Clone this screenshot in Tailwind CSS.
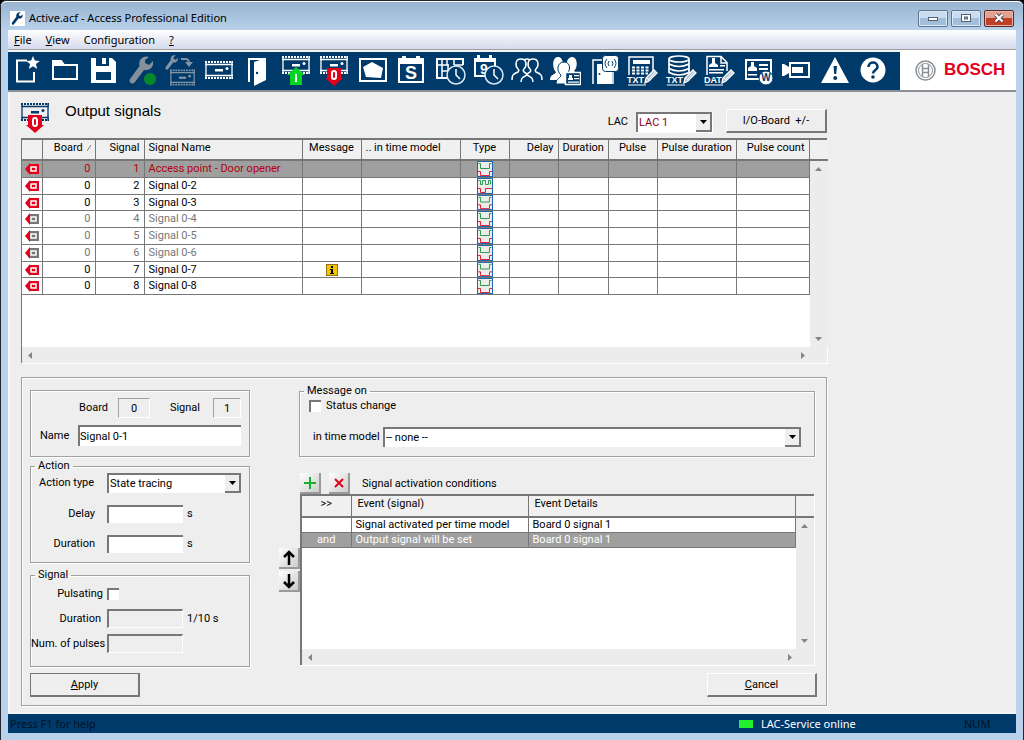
<!DOCTYPE html>
<html lang="en">
<head>
  <meta charset="UTF-8">
  <meta name="viewport" content="width=device-width, initial-scale=1.0">
  <title>Active.acf - Access Professional Edition</title>
  <script src="https://cdn.jsdelivr.net/npm/@tailwindcss/browser@4"></script>
</head>
<body class="bg-black font-[Roboto,'Noto_Sans',sans-serif] text-[11px] leading-[14px] text-black">

<!-- Shared icons -->
<svg class="hidden">
  <symbol id="board" viewBox="0 0 28 18">
    <path d="M1 0v18M27 0v18M0 3.500h28M0 14.500h28" fill="none" stroke="currentColor" stroke-width="1.300"/>
    <path d="M0 1h28M0 17h28" fill="none" stroke="currentColor" stroke-width="2" stroke-dasharray="2 1"/>
    <path d="M10 8h8v2.500h-8z" fill="currentColor"/>
    <circle cx="22" cy="7.500" r="1.500" fill="currentColor"/>
  </symbol>
  <symbol id="wrench" viewBox="0 0 26 28">
    <path d="M20 1c-5-2-11 2-9.500 9L1 23c-2 4 3 6 5 3l9-12c6 1 10-3 9-9l-4 4-4-2 0-3z" fill="currentColor"/>
  </symbol>
  <symbol id="pencil" viewBox="0 0 14 15">
    <path d="M1 14l1-5 8-8 3 3-8 8z" fill="#a9bccd" stroke="#fff" stroke-width="1.300"/>
    <path d="M3 9l3 3M5 10l6-7" stroke="#fff" fill="none"/>
  </symbol>
  <symbol id="clock" viewBox="0 0 20 20">
    <circle cx="10" cy="10" r="9" fill="#003a6b" stroke="#d8e9f7" stroke-width="1.500"/>
    <path d="M10 4v6l4 4" fill="none" stroke="#fff" stroke-width="1.500"/>
  </symbol>
  <symbol id="out-on" viewBox="0 0 14 12">
    <path d="M0 6l5-6v1h9v10H5v1z" fill="#e2001a"/>
    <rect x="6" y="4" width="5" height="4" fill="none" stroke="#fff" stroke-width="1.500"/>
  </symbol>
  <symbol id="out-off" viewBox="0 0 14 12">
    <path d="M5 1h9v10H5z" fill="#777"/>
    <path d="M0 6l5-6v12z" fill="#e2001a"/>
    <rect x="6" y="4" width="5" height="4" fill="#777" stroke="#fff" stroke-width="1.500"/>
  </symbol>
  <symbol id="trace" viewBox="0 0 16 16">
    <rect x="0.500" y="0.500" width="15" height="15" fill="#ececea" stroke="#1f66ad"/>
    <path d="M1.500 2.500h2v5h9v-5h2" fill="none" stroke="#2f9a50"/>
    <path d="M1 10.500h2.500v4h9v-4H15" fill="none" stroke="#e2203a"/>
  </symbol>
  <symbol id="trace-pulse" viewBox="0 0 16 16">
    <rect x="0.500" y="0.500" width="15" height="15" fill="#ececea" stroke="#1f66ad"/>
    <path d="M1.500 2.500h2v4h2v-4h3v4h3v-4h2v4" fill="none" stroke="#2f9a50"/>
    <path d="M1 10.500h2.500v4h5v-4H15" fill="none" stroke="#e2203a"/>
  </symbol>
</svg>

<div class="flex min-h-screen flex-col rounded-t-md border border-[#23282e] bg-[#b9d1ea] px-[7px] pb-[7px]">

  <!-- Title bar -->
  <header class="-mx-[7px] flex h-[29px] items-center rounded-t-md border-t border-white bg-linear-to-b from-[#98b4d1] to-[#b9d1ea] pt-1 pr-[9px] pl-[9px]">
    <svg class="h-[15px] w-[15px] bg-white p-px text-[#003a6b]"><use href="#wrench"/></svg>
    <h1 class="ml-1 flex-1 font-['Noto_Sans',sans-serif] text-[11px]">Active.acf - Access Professional Edition</h1>
    <div class="flex gap-[3px]">
      <button type="button" aria-label="Minimize" class="flex h-[17px] w-[30px] items-center justify-center rounded-xs border border-[#5d7390] bg-linear-to-b from-[#c9dcf0] from-50% to-[#a2bdd9] to-50% shadow-[inset_0_0_0_1px_#dceaf7]">
        <svg width="12" height="10"><rect x="1.500" y="4.500" width="9" height="3" fill="#fff" stroke="#53606f"/></svg>
      </button>
      <button type="button" aria-label="Maximize" class="flex h-[17px] w-[30px] items-center justify-center rounded-xs border border-[#5d7390] bg-linear-to-b from-[#c9dcf0] from-50% to-[#a2bdd9] to-50% shadow-[inset_0_0_0_1px_#dceaf7]">
        <svg width="12" height="10"><rect x="1.500" y="1.500" width="9" height="7" fill="#fff" stroke="#53606f"/><rect x="4.500" y="4" width="3" height="2" fill="#a2bdd9" stroke="#53606f"/></svg>
      </button>
      <button type="button" aria-label="Close" class="flex h-[17px] w-[30px] items-center justify-center rounded-xs border border-[#5b2a26] bg-linear-to-b from-[#e0a193] from-50% to-[#c33f24] to-50% shadow-[inset_0_0_0_1px_#e9b5a8]">
        <svg width="12" height="10"><path d="M2.500 1.500l7 7M9.500 1.500l-7 7" stroke="#53424a" stroke-width="4"/><path d="M2.500 1.500l7 7M9.500 1.500l-7 7" stroke="#fff" stroke-width="2.300"/></svg>
      </button>
    </div>
  </header>

  <!-- Menu -->
  <nav class="flex h-[19px] items-center gap-[14px] bg-linear-to-b from-white to-[#d5daec] pl-[6px] font-['Noto_Sans',sans-serif] text-[11px]">
    <a href="#"><u>F</u>ile</a>
    <a href="#"><u>V</u>iew</a>
    <a href="#">Configuration</a>
    <a href="#"><u>?</u></a>
  </nav>

  <!-- Toolbar -->
  <div class="flex h-[43px] border-t border-b-2 border-t-[#a0a0a0] border-b-[#8b8f96] bg-[#003a6b]">
    <div class="flex flex-1 items-center justify-between border-t-2 border-[#f4f4f4] pr-[11px] pl-[2px] text-white">
      <button type="button" title="New"><svg width="32" height="32" fill="none" stroke="currentColor" stroke-width="2"><path d="M17 5.500H7v21h17V17"/><path d="M23 1l1.800 4.500 5 .4-3.900 3.200 1.300 4.900-4.200-2.700-4.200 2.700 1.300-4.900-3.900-3.200 5-.4z" fill="currentColor" stroke="none"/></svg></button>
      <button type="button" title="Open"><svg width="32" height="32"><path d="M4 24V6h8l3 4h13v14z" fill="none" stroke="currentColor" stroke-width="2"/><path d="M3 5h9l5 6H3z" fill="currentColor"/></svg></button>
      <button type="button" title="Save"><svg width="32" height="32"><path fill-rule="evenodd" d="M4 3h21l4 4v21H4zM9 3v8h13V3h-3v6h-4V3zM9 17v8h15v-8z" fill="currentColor"/></svg></button>
      <button type="button" title="Maintenance"><svg width="32" height="32"><svg x="3" y="1" width="26" height="28" color="#84909c"><use href="#wrench"/></svg><circle cx="24" cy="24" r="6" fill="#07892b"/></svg></button>
      <button type="button" title="Configure controller" class="text-[#8394a5]"><svg width="32" height="32"><use href="#wrench" x="1" y="0" width="14" height="15"/><use href="#board" x="6" y="14" width="25" height="17"/><path d="M17 4h5q3 0 3 5" fill="none" stroke="currentColor" stroke-width="2"/><path d="M21 7h8l-4 5z" fill="currentColor"/></svg></button>
      <button type="button" title="Controller"><svg width="32" height="32"><use href="#board" x="2" y="6" width="28" height="18"/></svg></button>
      <button type="button" title="Entrances"><svg width="32" height="32"><path d="M8 27V4h17" fill="none" stroke="currentColor" stroke-width="2"/><path d="M13 7l12-4v22l-12 6z" fill="currentColor"/><circle cx="16" cy="18" r="1.200" fill="#003a6b"/></svg></button>
      <button type="button" title="Input signals"><svg width="32" height="32"><use href="#board" x="2" y="1" width="28" height="18"/><path d="M16 12l8.500 8H22v10H10V20H7.500z" fill="#00d520"/><path d="M16 19v8" stroke="#fff" stroke-width="2"/></svg></button>
      <button type="button" title="Output signals"><svg width="32" height="32"><use href="#board" x="2" y="1" width="28" height="18"/><path d="M9 13h14v10h2l-9 8-9-8h2z" fill="#e2001a"/><rect x="14" y="16" width="4" height="8" rx="2" fill="none" stroke="#fff" stroke-width="2"/></svg></button>
      <button type="button" title="Areas"><svg width="32" height="32"><path d="M3 4h26v22H3z" fill="none" stroke="currentColor" stroke-width="2"/><path d="M6 12l9-5 11 6-2 10-15-1z" fill="currentColor"/></svg></button>
      <button type="button" title="Holidays"><svg width="32" height="32"><path d="M4 4h24v23H4z" fill="none" stroke="currentColor" stroke-width="2"/><path d="M3 3h4V1h4v2h10V1h4v2h4v6H3z" fill="currentColor"/><text x="16" y="24" text-anchor="middle" font-family="Liberation Sans" font-weight="700" font-size="18" fill="currentColor">S</text></svg></button>
      <button type="button" title="Day models"><svg width="32" height="32"><path d="M3 4v19h12M2 4h27v6" fill="none" stroke="currentColor" stroke-width="2"/><path d="M3 10h12M20 10h9M8 16h6M8 4v19M8 10v6M13 4v6M20 4v6M14 10v6" fill="none" stroke="currentColor" stroke-width="1.500"/><use href="#clock" x="12" y="10" width="20" height="20"/></svg></button>
      <button type="button" title="Time models"><svg width="32" height="32"><path d="M3 4h20v17H3z" fill="none" stroke="currentColor" stroke-width="2"/><path d="M2 3h3V0h3v3h9V0h3v3h4v4H2z" fill="currentColor"/><text x="12" y="19" text-anchor="middle" font-family="Liberation Sans" font-weight="700" font-size="14" fill="currentColor">9</text><use href="#clock" x="12" y="10" width="20" height="20"/></svg></button>
      <button type="button" title="Persons"><svg width="32" height="32" fill="none" stroke="currentColor" stroke-width="1.500"><path d="M1 25c0-5 1-6 6-8 1-1 1-2 0-3-3-3-3-10 3-10s6 7 3 10c-1 1-1 2 0 3 2 1 3 2 3 3M16 20c0-1 1-2 3-3 1-1 1-2 0-3-3-3-3-10 3-10s6 7 3 10c-1 1-1 2 0 3 5 2 6 3 6 8"/><path d="M10 27c0-4 2-5 6-7M22 27c0-4-2-5-6-7M13 5q3-2 6 0"/></svg></button>
      <button type="button" title="Person groups"><svg width="32" height="32" fill="currentColor"><path d="M1 25c0-6 5-5 6-8C3 13 3 2 9 2s6 11 3 15l4 8zM16 22l4-6c-4-4-3-14 3-14s6 11 2 14l4 3v3z"/><path d="M7 29c0-6 5-6 5-9-5-4-4-13 3-13s7 9 2 13c0 3 5 3 5 9z" stroke="#003a6b"/><path d="M16.500 17.500h15v12h-15z" fill="#003a6b" stroke="#fff" stroke-width="1.500"/><path d="M19 25h5v-2h-1v-3h-3v3h-1zM25 20h5v1.200h-5zM25 23h5v1.200h-5zM19 26.500h11v1.200H19z"/></svg></button>
      <button type="button" title="Readers"><svg width="32" height="32"><path d="M5 29V5h20v24" fill="none" stroke="currentColor" stroke-width="1.500"/><path d="M9 9h15v20H9z" fill="currentColor"/><circle cx="11.500" cy="19" r="1" fill="#003a6b"/><rect x="14.500" y="0.500" width="16" height="16" rx="3" fill="#fff" stroke="#003a6b"/><path d="M19 4q-4 4 0 9M21 6q-2 3 0 5M26 4q4 4 0 9M24 6q2 3 0 5" fill="none" stroke="#003a6b"/></svg></button>
      <button type="button" title="PIN text"><svg width="32" height="32"><path d="M3 20V2h24v14" fill="none" stroke="currentColor" stroke-width="1.500"/><path d="M7 5h17v4H7z" fill="currentColor"/><path d="M6 12.500h18M6 15.500h18M6 18.500h16" stroke="currentColor" stroke-width="2" stroke-dasharray="3 1.500"/><text x="1" y="28" font-family="Liberation Sans" font-weight="700" font-size="9" fill="currentColor">TXT</text><path d="M2 30h18" stroke="currentColor"/><use href="#pencil" x="18" y="14" width="14" height="15"/></svg></button>
      <button type="button" title="Database text"><svg width="32" height="32"><path d="M4 4.500v13q10 5 20 0v-13M4 9q10 5 20 0M4 13.500q10 5 20 0" fill="none" stroke="currentColor" stroke-width="1.700"/><ellipse cx="14" cy="4" rx="10" ry="3" fill="#003a6b" stroke="currentColor" stroke-width="1.700"/><text x="1" y="28" font-family="Liberation Sans" font-weight="700" font-size="9" fill="currentColor">TXT</text><path d="M2 30h18" stroke="currentColor"/><use href="#pencil" x="18" y="14" width="14" height="15"/></svg></button>
      <button type="button" title="Log data"><svg width="32" height="32"><path d="M4 20V1.500h14l6 6V16M18 1v7h6" fill="none" stroke="currentColor" stroke-width="1.500"/><path d="M6 12h9v-2l-3-2V3H9v5l-3 2zM6 14h15v1.500H6zM6 17h14v1.500H6zM17 10h5v1.500h-5z" fill="currentColor"/><text x="1" y="28" font-family="Liberation Sans" font-weight="700" font-size="9" fill="currentColor">DAT</text><path d="M2 30h18" stroke="currentColor"/><use href="#pencil" x="18" y="14" width="14" height="15"/></svg></button>
      <button type="button" title="Wiegand cards"><svg width="32" height="32"><path d="M4 5h25v19H4z" fill="none" stroke="currentColor" stroke-width="2"/><path d="M6 16h9v-3l-3-2V7H9v4l-3 2zM17 9h9v2h-9zM17 13h9v2h-9zM6 19h9v1.500H6z" fill="currentColor"/><circle cx="24" cy="23" r="7" fill="#fff" stroke="#003a6b"/><text x="24" y="26" text-anchor="middle" font-family="Liberation Sans" font-weight="700" font-size="10" fill="#003a6b">W</text></svg></button>
      <button type="button" title="Cameras"><svg width="32" height="32"><path d="M10 8h19v14H10z" fill="none" stroke="currentColor" stroke-width="2"/><path d="M2 9l2 0 5 3v6l-5 3H2zM12 12h11v6H12z" fill="currentColor"/></svg></button>
      <button type="button" title="Alarms"><svg width="32" height="32"><path d="M16 2l14 26H2z" fill="currentColor"/><path d="M14.500 11h3.500l-.8 8h-2z" fill="#003a6b"/><circle cx="16.200" cy="23" r="2" fill="#003a6b"/></svg></button>
      <button type="button" title="Help"><svg width="32" height="32"><circle cx="16" cy="15" r="12.500" fill="currentColor"/><path d="M11.500 12c0-6 9-6 9 0 0 3-4.500 3-4.500 6.500" fill="none" stroke="#003a6b" stroke-width="2.600"/><circle cx="16" cy="22" r="1.800" fill="#003a6b"/></svg></button>
    </div>
    <div class="flex w-[116px] items-center gap-2 bg-white pl-[15px]">
      <svg width="21" height="21" fill="none" stroke="#8a8f94"><circle cx="10.500" cy="10.500" r="9.500" stroke-width="1.500"/><circle cx="10.500" cy="10.500" r="7"/><path d="M7.500 4.500v12M13.500 4.500v12M7.500 8.500h6M7.500 12.500h6" stroke-width="1.500"/></svg>
      <span class="font-['Liberation_Sans',sans-serif] text-[17px] font-bold text-[#e2001a]">BOSCH</span>
    </div>
  </div>

  <!-- Work area -->
  <main class="flex-1 border-l-2 border-[#f8f8f8] bg-[#eee] pr-3 pb-[6px] pl-[11px]">
    <div class="max-w-[806px]">

      <div class="flex h-[46px] pt-[9px]">
        <svg width="28" height="33" class="text-[#003a6b]"><use href="#board" x="0" y="2" width="28" height="18"/><path d="M7 14h14v10h2l-9 8-9-8h2z" fill="#e2001a"/><rect x="12" y="17" width="4" height="8" rx="2" fill="none" stroke="#fff" stroke-width="2"/></svg>
        <h2 class="ml-4 font-['Liberation_Sans',sans-serif] text-[15px] leading-5">Output signals</h2>
        <div class="ml-auto flex items-start gap-2 pt-2">
          <label for="lac" class="pt-[6px]">LAC</label>
          <div class="relative pt-[3px]">
            <select id="lac" class="h-5 w-[76px] appearance-none border-t-2 border-l-2 border-[#777] bg-white pl-px text-[#8b0010] shadow-[1px_1px_0_#fff]"><option>LAC 1</option></select>
            <span class="pointer-events-none absolute top-[5px] right-0 flex h-[18px] w-4 items-center justify-center border-r-2 border-b-2 border-[#777] bg-[#eee]"><svg width="7" height="4"><path d="M0 0h7L3.500 4z"/></svg></span>
          </div>
          <button type="button" class="ml-[6px] h-6 w-[101px] border border-r-2 border-b-2 border-white border-r-[#777] border-b-[#777] whitespace-pre">I/O-Board  +/-</button>
        </div>
      </div>

      <!-- Output signal list -->
      <div class="border-t-2 border-l border-t-[#777] border-l-[#777] bg-[#ececec] shadow-[1px_1px_0_#fff]">
        <div class="flex h-[207px] bg-white">
          <table class="w-full table-fixed self-start border-collapse">
            <colgroup>
              <col class="w-[20px]"><col class="w-[53px]"><col class="w-[49px]"><col class="w-[158px]"><col class="w-[59px]"><col class="w-[99px]"><col class="w-[49px]"><col class="w-[49px]"><col class="w-[50px]"><col class="w-[49px]"><col class="w-[79px]"><col class="w-[73px]">
            </colgroup>
            <thead class="bg-[#f0f0f0] whitespace-nowrap [&_th]:h-5 [&_th]:border-r [&_th]:border-b-2 [&_th]:border-[#777] [&_th]:px-1 [&_th]:pb-1 [&_th]:font-normal">
              <tr>
                <th></th>
                <th class="text-right">Board <svg width="4" height="6" class="ml-px inline" stroke="#777"><path d="M0 6l4-6"/></svg></th>
                <th class="text-right">Signal</th>
                <th class="text-left">Signal Name</th>
                <th>Message</th>
                <th class="text-left">.. in time model</th>
                <th>Type</th>
                <th class="text-right">Delay</th>
                <th class="text-right">Duration</th>
                <th>Pulse</th>
                <th class="text-right">Pulse duration</th>
                <th class="text-right">Pulse count</th>
              </tr>
            </thead>
            <tbody class="[&_td]:border-r [&_td]:border-b [&_td]:border-[#777] [&_td]:px-1 [&_td]:py-0 [&_td]:whitespace-nowrap [&_svg]:mx-auto [&_tr]:h-[17px] [&_tr]:nth-[4n+3]:h-[16px]">
              <tr class="bg-[#9f9f9f] text-[#b3000f]">
                <td class="px-0!"><svg width="14" height="12"><use href="#out-on"/></svg></td><td class="text-right">0</td><td class="text-right">1</td><td>Access point - Door opener</td><td></td><td></td><td><svg width="16" height="16"><use href="#trace"/></svg></td><td></td><td></td><td></td><td></td><td></td>
              </tr>
              <tr>
                <td class="px-0!"><svg width="14" height="12"><use href="#out-on"/></svg></td><td class="text-right">0</td><td class="text-right">2</td><td>Signal 0-2</td><td></td><td></td><td><svg width="16" height="16"><use href="#trace-pulse"/></svg></td><td></td><td></td><td></td><td></td><td></td>
              </tr>
              <tr>
                <td class="px-0!"><svg width="14" height="12"><use href="#out-on"/></svg></td><td class="text-right">0</td><td class="text-right">3</td><td>Signal 0-3</td><td></td><td></td><td><svg width="16" height="15" viewBox="0 0 16 16" preserveAspectRatio="none"><use href="#trace"/></svg></td><td></td><td></td><td></td><td></td><td></td>
              </tr>
              <tr class="text-[#777]">
                <td class="px-0!"><svg width="14" height="12"><use href="#out-off"/></svg></td><td class="text-right">0</td><td class="text-right">4</td><td>Signal 0-4</td><td></td><td></td><td><svg width="16" height="16"><use href="#trace"/></svg></td><td></td><td></td><td></td><td></td><td></td>
              </tr>
              <tr class="text-[#777]">
                <td class="px-0!"><svg width="14" height="12"><use href="#out-off"/></svg></td><td class="text-right">0</td><td class="text-right">5</td><td>Signal 0-5</td><td></td><td></td><td><svg width="16" height="16"><use href="#trace"/></svg></td><td></td><td></td><td></td><td></td><td></td>
              </tr>
              <tr class="text-[#777]">
                <td class="px-0!"><svg width="14" height="12"><use href="#out-off"/></svg></td><td class="text-right">0</td><td class="text-right">6</td><td>Signal 0-6</td><td></td><td></td><td><svg width="16" height="16"><use href="#trace"/></svg></td><td></td><td></td><td></td><td></td><td></td>
              </tr>
              <tr>
                <td class="px-0!"><svg width="14" height="12"><use href="#out-on"/></svg></td><td class="text-right">0</td><td class="text-right">7</td><td>Signal 0-7</td><td><svg width="12" height="12"><rect x="0.500" y="0.500" width="11" height="11" fill="#f5c400" stroke="#8f7413"/><path d="M5 2h2v2H5zM4 5h3v4h1v1H4V9h1V6H4z"/></svg></td><td></td><td><svg width="16" height="15" viewBox="0 0 16 16" preserveAspectRatio="none"><use href="#trace"/></svg></td><td></td><td></td><td></td><td></td><td></td>
              </tr>
              <tr>
                <td class="px-0!"><svg width="14" height="12"><use href="#out-on"/></svg></td><td class="text-right">0</td><td class="text-right">8</td><td>Signal 0-8</td><td></td><td></td><td><svg width="16" height="16"><use href="#trace"/></svg></td><td></td><td></td><td></td><td></td><td></td>
              </tr>
            </tbody>
          </table>
          <div class="flex w-[18px] shrink-0 flex-col bg-[#ececec]">
            <div class="h-[21px] border-b-2 border-[#777] bg-[#f0f0f0]"></div>
            <div class="flex flex-1 flex-col items-center justify-between py-[6px] pr-px">
              <svg width="7" height="4" fill="#858585"><path d="M0 4h7L3.500 0z"/></svg>
              <svg width="7" height="4" fill="#858585"><path d="M0 0h7L3.500 4z"/></svg>
            </div>
          </div>
        </div>
        <div class="flex h-4 items-center justify-between pr-[22px] pl-[6px]">
          <svg width="4" height="7" fill="#858585"><path d="M4 0v7L0 3.500z"/></svg>
          <svg width="4" height="7" fill="#858585"><path d="M0 0v7l4-3.500z"/></svg>
        </div>
      </div>

      <!-- Signal details -->
      <form class="mt-[14px] border border-[#a0a0a0] px-2 pb-2 shadow-[1px_1px_0_#fff,inset_1px_1px_0_#fff]">
        <div class="flex justify-between">
          <div class="w-[220px] shrink-0 pt-3">

            <fieldset class="h-[67px] border border-[#a0a0a0] pt-[7px] pr-2 shadow-[1px_1px_0_#fff,inset_1px_1px_0_#fff]">
              <div class="flex items-center">
                <label for="board-no" class="w-[77px] text-right">Board</label>
                <input id="board-no" type="text" value="0" readonly class="ml-[10px] h-5 w-8 border border-[#a0a0a0] border-r-white border-b-white text-center">
                <label for="signal-no" class="ml-auto">Signal</label>
                <input id="signal-no" type="text" value="1" readonly class="ml-[13px] h-5 w-7 border border-[#a0a0a0] border-r-white border-b-white text-center">
              </div>
              <div class="mt-[7px] flex items-center">
                <label for="name" class="w-[47px] pl-[9px]">Name</label>
                <input id="name" type="text" value="Signal 0-1" class="h-[21px] min-w-0 flex-1 border-t-2 border-l-2 border-[#777] bg-white">
              </div>
            </fieldset>

            <fieldset class="mt-[2px] h-[104px] border border-[#a0a0a0] pr-2 pl-2 shadow-[1px_1px_0_#fff,inset_1px_1px_0_#fff]">
              <legend class="-ml-1 px-[3px]">Action</legend>
              <div class="flex items-center">
                <label for="action-type" class="w-[68px]">Action type</label>
                <div class="relative flex-1">
                  <select id="action-type" class="block h-5 w-full appearance-none border-t-2 border-l-2 border-[#777] bg-white pl-px"><option>State tracing</option></select>
                  <span class="pointer-events-none absolute top-[2px] right-0 flex h-[18px] w-4 items-center justify-center border-r-2 border-b-2 border-[#777] bg-[#eee]"><svg width="7" height="4"><path d="M0 0h7L3.500 4z"/></svg></span>
                </div>
              </div>
              <div class="mt-3 flex items-center">
                <label for="delay" class="w-[68px] pr-3 text-right">Delay</label>
                <input id="delay" type="text" class="h-[18px] w-[76px] border-t-2 border-l-2 border-[#777] bg-white">
                <span class="ml-1">s</span>
              </div>
              <div class="mt-3 flex items-center">
                <label for="duration" class="w-[68px] pr-3 text-right">Duration</label>
                <input id="duration" type="text" class="h-[18px] w-[76px] border-t-2 border-l-2 border-[#777] bg-white">
                <span class="ml-1">s</span>
              </div>
            </fieldset>

            <fieldset class="mt-[5px] h-[99px] border border-[#a0a0a0] shadow-[1px_1px_0_#fff,inset_1px_1px_0_#fff]">
              <legend class="ml-1 px-[3px]">Signal</legend>
              <div class="mt-[5px] flex items-center">
                <label for="pulsating" class="w-[76px] pr-1 text-right">Pulsating</label>
                <input id="pulsating" type="checkbox" class="h-3 w-3 appearance-none border-t-2 border-l-2 border-[#777] bg-white">
              </div>
              <div class="mt-2 flex items-center">
                <label for="pulse-duration" class="w-[76px] pr-[6px] text-right">Duration</label>
                <input id="pulse-duration" type="text" disabled class="h-[19px] w-[76px] border-t-2 border-r border-b border-l-2 border-[#777] border-r-white border-b-white">
                <span class="ml-1">1/10 s</span>
              </div>
              <div class="mt-[6px] flex items-center">
                <label for="pulses" class="w-[76px] pr-[6px] text-right whitespace-nowrap">Num. of pulses</label>
                <input id="pulses" type="text" disabled class="h-[19px] w-[76px] border-t-2 border-r border-b border-l-2 border-[#777] border-r-white border-b-white">
              </div>
            </fieldset>
          </div>

          <div class="ml-[29px] min-w-0 flex-1 pt-[6px] pr-[3px]">
            <fieldset class="ml-5 h-[73px] border border-[#a0a0a0] px-[9px] shadow-[1px_1px_0_#fff,inset_1px_1px_0_#fff]">
              <legend class="-ml-[5px] px-[3px]">Message on</legend>
              <div class="mt-px flex items-center gap-[5px]">
                <input id="status-change" type="checkbox" class="h-3 w-3 appearance-none border-t-2 border-l-2 border-[#777] bg-white">
                <label for="status-change">Status change</label>
              </div>
              <div class="mt-[14px] flex items-center">
                <label for="time-model" class="w-[74px] pl-1 whitespace-nowrap">in time model</label>
                <div class="relative mr-1 flex-1">
                  <select id="time-model" class="block h-5 w-full appearance-none border-t-2 border-l-2 border-[#777] bg-white pl-px"><option>-- none --</option></select>
                  <span class="pointer-events-none absolute top-[2px] right-0 flex h-[18px] w-4 items-center justify-center border-r-2 border-b-2 border-[#777] bg-[#eee]"><svg width="7" height="4"><path d="M0 0h7L3.500 4z"/></svg></span>
                </div>
              </div>
            </fieldset>

            <div class="mt-4 ml-[21px] flex items-center gap-2">
              <button type="button" aria-label="Add condition" class="flex h-[21px] w-[21px] items-center justify-center border-r-2 border-b-2 border-[#999] bg-linear-to-br from-white to-[#ccc]"><svg width="12" height="12"><path d="M6 0v12M0 6h12" stroke="#12b32a" stroke-width="2"/></svg></button>
              <button type="button" aria-label="Delete condition" class="flex h-[21px] w-[21px] items-center justify-center border-r-2 border-b-2 border-[#999] bg-linear-to-br from-white to-[#ccc]"><svg width="10" height="10"><path d="M1 1l8 8M9 1L1 9" stroke="#e2001a" stroke-width="2"/></svg></button>
              <span class="ml-1">Signal activation conditions</span>
            </div>

            <div class="flex pr-px">
              <div class="flex w-[21px] shrink-0 flex-col gap-[2px] pt-[54px]">
                <button type="button" aria-label="Move up" class="flex h-[21px] items-center justify-center border-r-2 border-b-2 border-[#999] bg-linear-to-br from-white to-[#ccc]"><svg width="14" height="16" fill="none" stroke="#000" stroke-width="2.500"><path d="M7 15V2M2 7l5-5 5 5"/></svg></button>
                <button type="button" aria-label="Move down" class="flex h-[21px] items-center justify-center border-r-2 border-b-2 border-[#999] bg-linear-to-br from-white to-[#ccc]"><svg width="14" height="16" fill="none" stroke="#000" stroke-width="2.500"><path d="M7 1v13M2 9l5 5 5-5"/></svg></button>
              </div>
              <div class="min-w-0 flex-1 border-t-2 border-l-2 border-[#777] bg-[#ececec] shadow-[1px_1px_0_#fff]">
                <div class="flex h-[153px] bg-white">
                  <table class="w-full table-fixed self-start border-collapse">
                    <thead class="bg-[#f0f0f0] [&_th]:h-[21px] [&_th]:border-r [&_th]:border-b-2 [&_th]:border-[#777] [&_th]:px-[6px] [&_th]:pb-1 [&_th]:text-left [&_th]:font-normal">
                      <tr><th class="w-[49px] text-center!">&gt;&gt;</th><th class="w-[177px]">Event (signal)</th><th>Event Details</th></tr>
                    </thead>
                    <tbody class="[&_td]:h-[15px] [&_td]:border-r [&_td]:border-b [&_td]:border-[#777] [&_td]:px-1 [&_td]:py-0">
                      <tr><td></td><td>Signal activated per time model</td><td>Board 0 signal 1</td></tr>
                      <tr class="bg-[#9f9f9f] text-white"><td class="text-center">and</td><td>Output signal will be set</td><td>Board 0 signal 1</td></tr>
                    </tbody>
                  </table>
                  <div class="flex w-[18px] shrink-0 flex-col bg-[#ececec]">
                    <div class="h-[22px] border-b-2 border-[#777] bg-[#f0f0f0]"></div>
                    <div class="flex flex-1 flex-col items-center justify-between py-[6px] pr-px">
                      <svg width="7" height="4" fill="#858585"><path d="M0 4h7L3.500 0z"/></svg>
                      <svg width="7" height="4" fill="#858585"><path d="M0 0h7L3.500 4z"/></svg>
                    </div>
                  </div>
                </div>
                <div class="flex h-4 items-center justify-between pr-[22px] pl-[6px]">
                  <svg width="4" height="7" fill="#858585"><path d="M4 0v7L0 3.500z"/></svg>
                  <svg width="4" height="7" fill="#858585"><path d="M0 0v7l4-3.500z"/></svg>
                </div>
              </div>
            </div>
          </div>
        </div>

        <div class="mt-[6px] flex justify-between pr-px">
          <button type="submit" class="h-6 w-[110px] border-2 border-t border-l border-[#777]"><u>A</u>pply</button>
          <button type="button" class="h-6 w-[110px] border border-r-2 border-b-2 border-white border-r-[#777] border-b-[#777]"><u>C</u>ancel</button>
        </div>
      </form>
    </div>
  </main>

  <!-- Status bar -->
  <footer class="flex h-[21px] items-center border-t-2 border-[#f4f4f4] bg-[#003a6b] pl-[2px] font-['Noto_Sans',sans-serif] text-[11px]">
    <span class="flex-1 text-[#001226]">Press F1 for help</span>
    <span class="h-2 w-[14px] bg-[#22f02e]"></span>
    <span class="ml-2 w-[203px] text-white">LAC-Service online</span>
    <span class="w-[52px] text-[#001226]">NUM</span>
  </footer>
</div>
</body>
</html>
